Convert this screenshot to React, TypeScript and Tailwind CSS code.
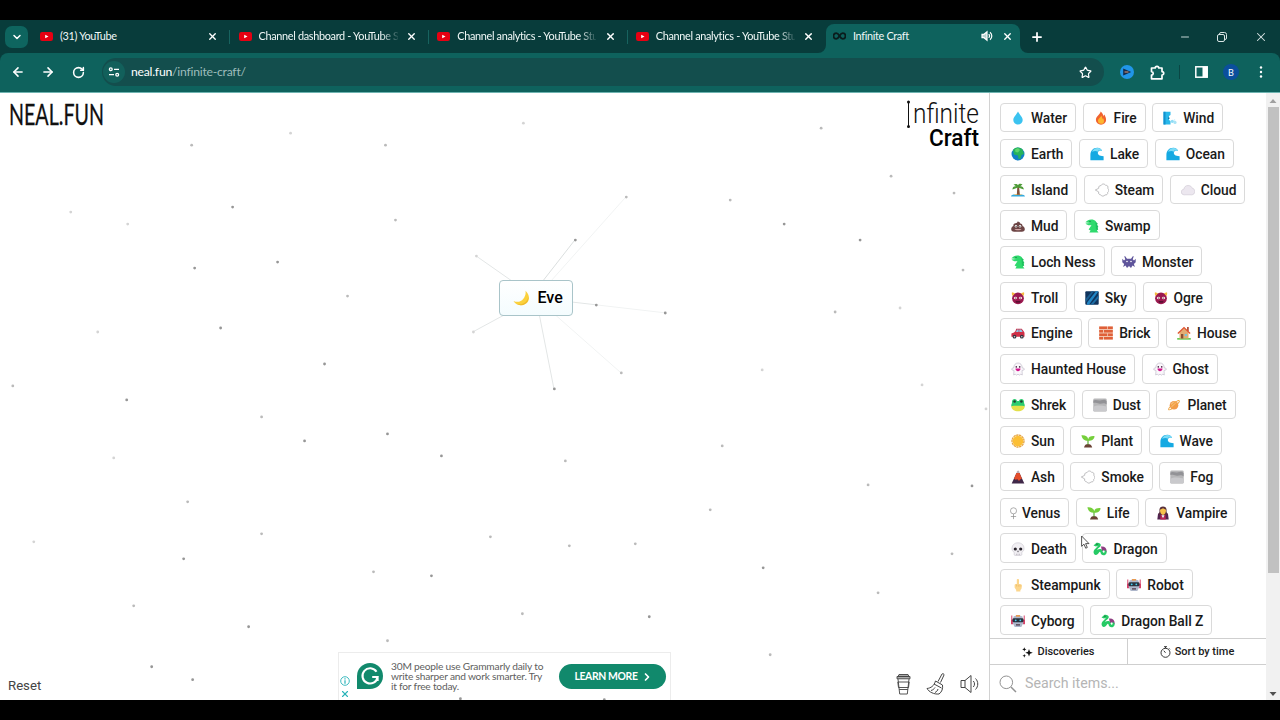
import React from 'react';
import {
  ArrowLeft,
  ArrowRight,
  ChevronDown,
  ChevronRight,
  Minus,
  Plus,
  RotateCw,
  Star,
  X,
} from 'lucide-react';

interface TabItem {
  title: string;
  fade?: boolean;
}

interface Element {
  name: string;
  icon: string;
}

const tabs: TabItem[] = [
  { title: '(31) YouTube' },
  { title: 'Channel dashboard - YouTube S', fade: true },
  { title: 'Channel analytics - YouTube Stu', fade: true },
  { title: 'Channel analytics - YouTube Stu', fade: true },
];

const rows: Element[][] = [
  [{ name: 'Water', icon: 'drop' }, { name: 'Fire', icon: 'fire' }, { name: 'Wind', icon: 'wind' }],
  [{ name: 'Earth', icon: 'earth' }, { name: 'Lake', icon: 'wave' }, { name: 'Ocean', icon: 'wave' }],
  [{ name: 'Island', icon: 'island' }, { name: 'Steam', icon: 'puff' }, { name: 'Cloud', icon: 'cloud' }],
  [{ name: 'Mud', icon: 'mud' }, { name: 'Swamp', icon: 'croc' }],
  [{ name: 'Loch Ness', icon: 'croc' }, { name: 'Monster', icon: 'invader' }],
  [{ name: 'Troll', icon: 'ogre' }, { name: 'Sky', icon: 'sky' }, { name: 'Ogre', icon: 'ogre' }],
  [{ name: 'Engine', icon: 'car' }, { name: 'Brick', icon: 'brick' }, { name: 'House', icon: 'house' }],
  [{ name: 'Haunted House', icon: 'ghost' }, { name: 'Ghost', icon: 'ghost' }],
  [{ name: 'Shrek', icon: 'frog' }, { name: 'Dust', icon: 'fog' }, { name: 'Planet', icon: 'planet' }],
  [{ name: 'Sun', icon: 'sun' }, { name: 'Plant', icon: 'plant' }, { name: 'Wave', icon: 'wave' }],
  [{ name: 'Ash', icon: 'volcano' }, { name: 'Smoke', icon: 'puff' }, { name: 'Fog', icon: 'fog' }],
  [{ name: 'Venus', icon: 'venus' }, { name: 'Life', icon: 'plant' }, { name: 'Vampire', icon: 'vampire' }],
  [{ name: 'Death', icon: 'skull' }, { name: 'Dragon', icon: 'dragon' }],
  [{ name: 'Steampunk', icon: 'finger' }, { name: 'Robot', icon: 'robot' }],
  [{ name: 'Cyborg', icon: 'robot' }, { name: 'Dragon Ball Z', icon: 'dragon' }],
];

// Background particles: x, y, shade (0 light, 1 mid, 2 dark)
const particles: [number, number, number][] = [
  [523, 30, 0], [290, 40, 0], [191, 52, 1], [385, 52, 1], [821, 35, 1], [891, 83, 1], [954, 100, 1],
  [626, 104, 1], [730, 107, 1], [784, 131, 2], [860, 147, 2], [963, 177, 1], [70, 119, 0], [127, 131, 0],
  [232, 114, 2], [395, 127, 1], [277, 169, 2], [194, 175, 2], [347, 203, 1], [220, 235, 2], [97, 239, 0],
  [324, 271, 2], [12, 293, 1], [126, 307, 2], [261, 324, 1], [304, 348, 2], [387, 341, 2], [441, 363, 2],
  [476, 163, 0], [575, 147, 2], [596, 212, 2], [665, 220, 2], [473, 239, 0], [554, 296, 2], [621, 280, 1],
  [835, 219, 1], [900, 215, 0], [762, 277, 0], [922, 292, 0], [986, 316, 0], [722, 353, 1], [565, 368, 1],
  [710, 417, 1], [868, 392, 1], [972, 393, 2], [113, 365, 0], [187, 409, 1], [261, 441, 1], [33, 449, 0],
  [183, 466, 2], [490, 444, 1], [569, 453, 1], [635, 451, 1], [373, 479, 1], [431, 483, 2], [763, 475, 2],
  [878, 500, 1], [952, 461, 1], [133, 513, 1], [248, 534, 2], [387, 548, 1], [522, 521, 1], [649, 524, 2],
  [770, 562, 1], [151, 574, 2], [192, 587, 2], [460, 606, 2], [604, 607, 2],
];

const shades = ['#d4d4d4', '#bababa', '#969696'];

const glyphs: Record<string, React.ReactNode> = {
  drop: <path d="M7 .6C5.700 3.500 2.300 6 2.300 9.100a4.700 4.500 0 0 0 9.400 0C11.700 6 8.300 3.500 7 .6Z" fill="#3bc3f0" />,
  fire: (
    <>
      <path d="M6.500.5c.3 2.500-4.600 4.500-4.600 8.500a5.100 4.700 0 0 0 10.200 0c0-3-1.300-4-1.700-5.500-.7.500-.9 1.200-1 2C9.300 3.500 8.300 1.500 6.500.5Z" fill="#f1632f" />
      <path d="M7 4.500c.3 1.800-3 2.900-3 5.300a3 2.900 0 0 0 6 .1c0-1.400-.5-2-.9-2.700l-.7.9C8.300 6.700 8 5.500 7 4.500Z" fill="#fdb62f" />
    </>
  ),
  wind: (
    <>
      <path d="M.5.800h7v3.200L6 5v4l1.500 1v3.500H.5Z" fill="#29b8ea" />
      <path d="M.5.800h2v12.700h-2Z" fill="#1291cf" />
      <path d="M5 6.500h1.500v1.500H5Z" fill="#1377a9" />
      <circle cx="9.300" cy="10.300" r="1.600" fill="#8fdcf5" />
      <circle cx="12" cy="11.400" r="1.600" fill="#a9e4f6" />
      <circle cx="11.500" cy="9" r=".8" fill="#c6effa" />
    </>
  ),
  earth: (
    <>
      <circle cx="7" cy="7" r="6.500" fill="#1180c6" />
      <path d="M2 3C4-.2 9-.2 11.500 2.500L13 7l-2.500 1-1 3.500L7.500 12 7 8.500 3 7.500Z" fill="#27b35b" />
      <path d="M4 2.500 7 1l2 2-2 2.500L4.500 5Z" fill="#5ed66d" />
    </>
  ),
  wave: (
    <>
      <path d="M.4 13.300V8C.4 3.500 3.400.7 7.300.7c2.600 0 4.300 1.400 4.800 3.300C10.500 3 8.600 3.400 8 5c-.8 2.300 1.200 4.200 5.600 4.200v4.100Z" fill="#15a9e2" />
      <path d="M2 4.700C3.200 2 5.500.8 8 1c2 .2 3.500 1.300 4 3-1.600-1-3.500-.9-4.300.7-1.500-1-3.500-.7-5.700 0Z" fill="#7bdcf7" />
    </>
  ),
  island: (
    <>
      <path d="M0 13.500c0-1.500 2-2 3.500-2h7c1.500 0 3.500.7 3.500 2Z" fill="#35a9dc" />
      <path d="M2.500 12c1-1.500 8-1.500 9 0Z" fill="#f4c26b" />
      <path d="M6.300 4h1.800l.8 7.800H5.800Z" fill="#80513a" />
      <path d="M7 4.500 1.500 6.500C1.500 4 3 3 5 3.300L2.500 1.600C4.500.5 6.200.8 7 2.200 8 .5 10 .5 11.500 1.600L9.200 3.300c2-.3 3.600 1 3.600 3.200Z" fill="#4d9b37" />
    </>
  ),
  puff: (
    <path d="M.3 7 3.700 5.300C3.300 3.200 5 2.300 6 2.700 6.600.6 9.600.4 10.500 2.300c2-.3 3.100 1.400 2.200 2.900 1.500.9 1.500 3.200 0 4 .5 1.900-1.200 3.100-2.700 2.700-.9 1.700-3.600 1.600-4.300-.1C4.200 12 3.200 10.500 3.700 8.900Z" fill="#fff" stroke="#b0b0b3" strokeWidth=".8" strokeLinejoin="round" />
  ),
  cloud: <path d="M3.300 11.800C1.200 11.800.3 10.400.3 9c0-1.700 1.200-2.700 2.600-2.800C3.300 3.500 5 2.500 7.200 2.500c2.300 0 3.500 1.200 3.900 2.700 1.700.2 2.700 1.500 2.700 3.300 0 2-1.300 3.300-3.300 3.300Z" fill="#ece7ef" stroke="#cbc5d0" strokeWidth=".6" />,
  mud: (
    <>
      <path d="M6.500 2.500c1.800.3 2.700 1 2.700 2 1.800.3 2.500 1.500 2.300 2.500 1.500.5 2.300 1.700 2.300 3.200 0 1.600-1 2.500-3 2.500H3.200c-2 0-3-.9-3-2.500C.2 8.700 1 7.500 2.400 7c-.3-1.500.5-2.500 2-2.700C5.800 4.100 6.500 3.500 6.500 2.500Z" fill="#6d4545" />
      <circle cx="5" cy="7.300" r="1.200" fill="#fff" />
      <circle cx="9" cy="7.300" r="1.200" fill="#fff" />
      <circle cx="5.100" cy="7.300" r=".6" fill="#222" />
      <circle cx="8.900" cy="7.300" r=".6" fill="#222" />
      <path d="M3.500 9.900h7c-.5 1.800-6.500 1.800-7 0Z" fill="#d4a7a7" />
    </>
  ),
  croc: (
    <>
      <path d="M3 1.300C5-.1 9.300.2 10.800 2.300c1.600 2 2 5 2.200 8l-1.100 1.100 1.600 2.100H4.300l1.300-2-2-1 1.700-2.500L6.500 6C4.500 6.600 2 6.300.5 4.500L5 4 .3 3.300Z" fill="#2fda6d" />
      <path d="M10.500 3 13 4.700l-1.500.8L13.500 8l-1.400.6 1.200 2.500-2.300-.6Z" fill="#20bf5f" />
      <circle cx="5" cy="2.300" r=".6" fill="#145c36" />
    </>
  ),
  invader: (
    <>
      <path d="M3 1 5 3.700h4L11 1l.7.600-1 2.700L12 5.500l1.700-1.800v3.500L11.900 9l1 3-2.400-1.500L9 13 7 11l-2 2-1.500-2.500L1.100 12l1-3L.3 7.200V3.700L2 5.500l1.300-1.200-1-2.700Z" fill="#5f559b" />
      <circle cx="5" cy="6.500" r=".8" fill="#fff" />
      <circle cx="9" cy="6.500" r=".8" fill="#fff" />
    </>
  ),
  ogre: (
    <>
      <circle cx="7" cy="7.300" r="5.900" fill="#9b194f" />
      <path d="M1 1.200 4.200 2.200 1.600 5C.8 4 .6 2.500 1 1.200ZM13 1.200l-3.200 1L12.400 5C13.200 4 13.400 2.500 13 1.200Z" fill="#f5b840" />
      <ellipse cx="4.500" cy="7" rx="1.700" ry="1.300" fill="#ffd9e0" />
      <ellipse cx="9.500" cy="7" rx="1.700" ry="1.300" fill="#ffd9e0" />
      <circle cx="4.800" cy="7" r=".6" fill="#111" />
      <circle cx="9.200" cy="7" r=".6" fill="#111" />
      <path d="M4.500 10.200h5l-.5 1.300H5Z" fill="#430d27" />
    </>
  ),
  sky: (
    <>
      <rect x=".3" y=".3" width="13.400" height="13.400" rx="1" fill="#10345d" />
      <path d="M2 11.500 11 .3h2.500L4 13.700H2Z" fill="#2185c4" />
      <path d="M.5 8 7 .3h2L1 11Z" fill="#1a5e91" />
      <path d="M5.500 13.500 13.600 4v3L8 13.600Z" fill="#1d6ea7" />
    </>
  ),
  car: (
    <>
      <path d="m4.500 5 .7-2.300h5.500L12.500 5l1 1.700v4.100H.4V7.500l2.600-1Z" fill="#d02f47" />
      <path d="m5.500 5 .4-1.500h1.700V6H4.500ZM8.300 3.500h2L11.700 6H8.300Z" fill="#8dc7e6" />
      <circle cx="3.500" cy="10.700" r="1.900" fill="#353340" />
      <circle cx="10.800" cy="10.700" r="1.900" fill="#353340" />
      <circle cx="3.500" cy="10.700" r=".8" fill="#ccc" />
      <circle cx="10.800" cy="10.700" r=".8" fill="#ccc" />
    </>
  ),
  brick: (
    <>
      <rect x=".2" y=".5" width="13.600" height="13" fill="#f2c4ae" />
      <path d="M.2.500h8v2.500h-8ZM9 .5h4.800V3H9ZM.2 4H4v2.500H.2ZM5 4h8.800v2.500H5ZM.2 7.500h8V10h-8ZM9 7.500h4.800V10H9ZM.2 11H4v2.500H.2ZM5 11h8.800v2.500H5Z" fill="#df6039" />
    </>
  ),
  house: (
    <>
      <path d="M.2 12h13.600v1.700H.2Z" fill="#6acb54" />
      <path d="M2.500 6 7 2l4.500 4v6.500h-9Z" fill="#e3ac73" />
      <path d="M10 1h1.800v4H10Z" fill="#b5533b" />
      <path d="M7 .7.400 7l.9.900L7 2.600l5.700 5.300.9-.9Z" fill="#e0532f" />
      <path d="M4 8h2.300v4.500H4Z" fill="#8a5133" />
      <path d="M7.700 8H10v2H7.700Z" fill="#75c5dd" />
    </>
  ),
  ghost: (
    <>
      <path d="M2.700 13 3 8.500.8 7.800C.2 6.300 1.800 5.800 2.700 6 2.900 2.700 4.500 1 7 1s4.100 1.700 4.300 5c.9-.2 2.500.3 1.900 1.800L11 8.500l.3 4.500-1.500-.8-1.300.9L7 12.200l-1.500.9-1.300-.9Z" fill="#faf7fb" stroke="#b9b3c2" strokeWidth=".6" />
      <circle cx="5.300" cy="4.900" r=".8" fill="#44213f" />
      <circle cx="8.700" cy="4.900" r=".8" fill="#44213f" />
      <path d="M4.500 6.500h5C9.500 8.300 8.200 9.300 7 9.300S4.500 8.300 4.500 6.500Z" fill="#d3158d" />
    </>
  ),
  frog: (
    <>
      <path d="M1 5C.7 2 2 .9 3.600.9 5 .9 5.700 1.800 6 2.900h2C8.300 1.800 9 .9 10.400.9 12 .9 13.300 2 13 5c.6 1 .9 2.300.7 3.500H.3C.1 7.300.4 6 1 5Z" fill="#2dcc70" />
      <path d="M.3 8.300c2-.6 11.400-.6 13.400 0-.2 3.200-3 5-6.700 5S.5 11.500.3 8.300Z" fill="#e4e04a" />
      <circle cx="3.600" cy="3.500" r="1.300" fill="#213b30" />
      <circle cx="10.400" cy="3.500" r="1.300" fill="#213b30" />
    </>
  ),
  fog: (
    <>
      <rect x=".3" y=".4" width="13.400" height="13.200" rx="1.300" fill="#b6b6b8" />
      <path d="M.4 2.500C3 1 5 3 8 2.200s4-.7 5.600.8v3.500C10 4 9 6.500 6 5.500S2 4.500.4 5Z" fill="#929296" />
      <path d="M.4 8.500c3-1.500 8-1.500 13.200 0v4c0 .6-.5 1-1 1H1.500c-.6 0-1-.4-1-1Z" fill="#c9c9cc" />
    </>
  ),
  planet: (
    <>
      <circle cx="7" cy="7.200" r="4.300" fill="#f39a4c" />
      <path d="M4 5.200c2-2 4.300-2 5.700-.8L4.500 9.500Z" fill="#f7bb75" />
      <ellipse cx="7" cy="7.200" rx="6.900" ry="1.500" fill="none" stroke="#efa33f" strokeWidth="1" transform="rotate(-40 7 7.200)" />
    </>
  ),
  sun: (
    <>
      <circle cx="7" cy="7" r="6" fill="none" stroke="#e5a443" strokeWidth="1.300" strokeDasharray="2.350 .5" />
      <circle cx="7" cy="7" r="5.300" fill="#fcbf35" />
    </>
  ),
  plant: (
    <>
      <path d="M3 13.500c.5-2.500 2-3.500 4-3.500s3.700 1 4.200 3.500Z" fill="#6b4235" />
      <path d="M6.400 10.500V6h1.200v4.500Z" fill="#5cae36" />
      <path d="M7 6.800C4 7 1.200 5.500.4 1.300 4 .8 6.800 2.500 7.200 5.200 7.500 3 10 1.800 13.600 2.200 13.300 5.500 10.500 7 7 6.800Z" fill="#76cf3c" />
    </>
  ),
  volcano: (
    <>
      <path d="M5.500 3h3l4.800 10.500H.7Z" fill="#402849" />
      <path d="M5.500 3h3l2.400 5.500-1.700 1-1.200 1.500-1.500-1.800L4.500 9.800 3 8.500Z" fill="#e44d2b" />
      <path d="M5.700 3C5.500 1.300 6.500.6 7.300.5c.8.500 1.300 1.300 1.200 2.500Z" fill="#b9aeb8" />
    </>
  ),
  vampire: (
    <>
      <path d="M1.300 13.500 2 7.700 4.300 6h5.400L12 7.700l.7 5.800Z" fill="#51224f" />
      <path d="m4.700 7.200 2.300 5 2.300-5 .5 6.300H4.200Z" fill="#be2455" />
      <path d="M3.500 5C3 2 4.700.5 7 .5S11 2 10.500 5L11 9H9.300L9 5H5l-.3 4H3Z" fill="#59303b" />
      <path d="M4 3.800 7 2.300l3 1.500C10.100 7 8.500 9 7 9S3.900 7 4 3.800Z" fill="#f7c14b" />
      <path d="m5.500 9.200 1.500 3 1.500-3Z" fill="#fff" />
    </>
  ),
  skull: (
    <>
      <path d="M1 6.500C1 3 3.500.8 7 .8S13 3 13 6.500c0 1.700-.7 3-2.200 3.800v2.400c0 .4-.4.700-.9.700H4.100c-.5 0-.9-.3-.9-.7v-2.400C1.700 9.500 1 8.200 1 6.500Z" fill="#f1eff3" stroke="#c7c4cd" strokeWidth=".6" />
      <circle cx="4.300" cy="7" r="1.600" fill="#29242c" />
      <circle cx="9.700" cy="7" r="1.600" fill="#29242c" />
      <path d="m7 8.500.8 1.500H6.200ZM5.500 11.700v1.500M7 11.700v1.500M8.500 11.700v1.500" fill="#333" stroke="#a39fa8" strokeWidth=".5" />
    </>
  ),
  dragon: (
    <>
      <path d="M8 4.500c4-.5 6.300 2 5.500 6L11 8.200l-2 1Z" fill="#8e3d80" />
      <path d="m.5 3.500 3-2.700c2-.6 4.500.7 4.300 2.500C7.700 5 5 6 4 8c2-1.500 4.500-1.500 5.300.3.500 1.400.4 2.400 1.400 2.400 1.200 0 1.300-2 .3-2.500 2-.4 3 1 2.500 3-.6 2-3.500 2.700-5 1.300-1.300-1.300-.7-3-1.700-2.800-.9.200-1.300 2.800-3.700 3.300C1.500 13.200 0 11.200.7 9 1.300 7 4.500 5 5 3.700L3 4.500Z" fill="#26ca65" />
      <circle cx="4" cy="2.200" r=".6" fill="#174c2e" />
    </>
  ),
  finger: (
    <>
      <path d="M5.800 6V1.800C5.800.6 8 .6 8 1.800V6l1.800.2c1 .2 1.300 1 1.100 2l-.5 2.700-1 1v1.500H5.200v-1.500L3.600 9.600V6.900C3.800 6 5 5.800 5.800 6Z" fill="#fcd68c" />
      <path d="M5.500 6.500v2M7.300 6.700v1.900M9 6.700v1.900" stroke="#e4ac58" strokeWidth=".5" />
    </>
  ),
  robot: (
    <>
      <path d="M.3 1.500h1v5h-1ZM12.700 1.500h1v5h-1ZM0 5.800h2v4.500H0ZM12 5.800h2v4.500h-2Z" fill="#d64068" />
      <path d="M2.500 2.500C4 1 10 1 11.500 2.500l.8 6.500-2 4H3.700l-2-4Z" fill="#aeb7cb" />
      <path d="M5 1h4v1.700H5Z" fill="#e79a52" />
      <rect x="1.500" y="4.300" width="11" height="4" rx="1.300" fill="#28333f" />
      <circle cx="4.700" cy="6.300" r=".9" fill="#49d3f5" />
      <circle cx="9.300" cy="6.300" r=".9" fill="#49d3f5" />
      <path d="M5 10.300h4v1.200H5Z" fill="#4b3140" />
    </>
  ),
};

const ElementIcon = ({ name }: { name: string }) => {
  if (name === 'venus') {
    return (
      <svg className="-mr-px h-3.5 w-[7px] shrink-0 -ml-px" viewBox="0 0 8 14" fill="none" stroke="#8d8d8d" strokeWidth=".8">
        <circle cx="4" cy="4.500" r="3.500" />
        <path d="M4 8v6M1 11h6" />
      </svg>
    );
  }
  return (
    <svg className="h-3.5 w-3.5 shrink-0" viewBox="0 0 14 14" fill="none">
      {glyphs[name]}
    </svg>
  );
};

const YouTubeIcon = () => (
  <svg className="h-[13px] w-[13px] shrink-0" viewBox="0 0 13 13">
    <rect y="2" width="13" height="9" rx="2.200" fill="#e60012" />
    <path d="m5.200 4.700 3.300 1.800-3.300 1.800Z" fill="#fff" />
  </svg>
);

const TabStrip = () => (
  <div className="flex h-[33px] shrink-0 items-center bg-[#083c3b]">
    <div className="ml-[5px] flex h-[22px] w-[23px] shrink-0 items-center justify-center rounded-[7px] bg-[#0e655f]">
      <ChevronDown className="h-3 w-3 text-white" strokeWidth={3} />
    </div>
    <div className="ml-[3.500px] flex items-center">
      {tabs.map((tab, i) => (
        <div key={i} className="flex h-8 w-[198.600px] items-center pl-[8.500px]">
          <YouTubeIcon />
          <span
            className={`ml-[7px] w-[139px] text-[10.900px] tracking-[-0.330px] whitespace-nowrap text-[#f0f8f7] ${
              tab.fade ? '[mask-image:linear-gradient(to_right,#000_122px,transparent_141px)]' : ''
            }`}
          >
            {tab.title}
          </span>
          <X className="ml-[8.500px] h-[11px] w-[11px] shrink-0 text-white" strokeWidth={3} />
          {i < 3 && <span className="ml-[11px] h-3.5 w-px bg-[#17635f]" />}
        </div>
      ))}
    </div>
    <div className="relative ml-[0.500px] flex h-full w-[194px] shrink-0 items-center">
      <div className="absolute inset-x-0 top-1 bottom-0 rounded-t-[8px] bg-[#0e625d]" />
      <svg className="absolute bottom-0 -left-2 h-2 w-2" viewBox="0 0 8 8">
        <path d="M8 0v8H0a8 8 0 0 0 8-8Z" fill="#0e625d" />
      </svg>
      <svg className="absolute -right-2 bottom-0 h-2 w-2" viewBox="0 0 8 8">
        <path d="M0 0v8h8a8 8 0 0 1-8-8Z" fill="#0e625d" />
      </svg>
      <div className="relative flex w-full items-center">
        <svg className="ml-[7px] h-3 w-[13px]" viewBox="0 0 13 12" fill="none" stroke="#0a1c1c" strokeWidth="1.800">
          <path d="M6.500 6C5 3.500 4 3.200 3.200 3.200a2.700 2.800 0 0 0 0 5.600C4 8.800 5 8.500 6.500 6S9 3.200 9.800 3.200a2.700 2.800 0 0 1 0 5.600C9 8.800 8 8.500 6.500 6Z" />
        </svg>
        <span className="ml-[6.500px] w-[128px] text-[10.900px] tracking-[-0.330px] whitespace-nowrap text-[#f0f8f7]">Infinite Craft</span>
        <svg className="h-3 w-3" viewBox="0 0 12 12" fill="none" stroke="#fff" strokeWidth="1.200">
          <path d="M1 4.300h2L6 1.800v8.400L3 7.700H1Z" fill="#b8d3d0" />
          <path d="M7.700 4.200c1 1 1 2.600 0 3.600M9 2.200c2.400 2 2.400 5.600 0 7.600" />
        </svg>
        <X className="ml-[9px] h-[11px] w-[11px] text-white" strokeWidth={3} />
      </div>
    </div>
    <Plus className="ml-[10px] h-3.5 w-3.5 shrink-0 text-white" strokeWidth={3} />
    <div className="ml-auto flex items-center text-[#d9e5e5]">
      <Minus className="mr-[26px] h-3 w-3" strokeWidth={1.8} />
      <svg className="mr-[27px] h-2.5 w-2.5" viewBox="0 0 10 10" fill="none" stroke="currentColor">
        <rect x=".5" y="2.500" width="7" height="7" rx="1.500" />
        <path d="M2.500 2.500V2A1.500 1.500 0 0 1 4 .5h3.500a2 2 0 0 1 2 2V6A1.500 1.500 0 0 1 8 7.500h-.5" />
      </svg>
      <X className="mr-[12px] h-3.5 w-3.5" strokeWidth={1.8} />
    </div>
  </div>
);

const Toolbar = () => (
  <div className="shrink-0 bg-[#083c3b]">
    <div className="flex h-[39.500px] items-center rounded-t-[8px] border-b border-[#6fb4b1] bg-[#0e625d]">
      <ArrowLeft className="ml-[11px] h-3.5 w-3.5 text-white" strokeWidth={2.7} />
      <ArrowRight className="ml-[16px] h-3.5 w-3.5 text-white" strokeWidth={2.7} />
      <RotateCw className="ml-[17px] h-[13px] w-[13px] text-white" strokeWidth={2.8} />
      <div className="ml-[17px] flex h-7 w-[1002px] shrink-0 items-center rounded-full bg-[#134e4d]">
        <div className="ml-[1px] flex h-[22px] w-[22px] items-center justify-center rounded-full bg-[#12605b]">
          <svg className="h-3 w-3" viewBox="0 0 12 12" fill="none" stroke="#fff" strokeWidth="1.300">
            <circle cx="2.800" cy="3.300" r="1.400" />
            <path d="M6 3.300h5M1 8.700h5" />
            <circle cx="9.200" cy="8.700" r="1.400" />
          </svg>
        </div>
        <span className="ml-[6px] text-[12.200px] tracking-[-0.240px] text-[#9dbcbb]">
          <span className="text-white">neal.fun</span>/infinite-craft/
        </span>
        <Star className="mr-[12.500px] ml-auto h-[13px] w-[13px] text-white" strokeWidth={2.2} />
      </div>
      <svg className="ml-[16px] h-3.5 w-3.5 shrink-0" viewBox="0 0 14 14">
        <circle cx="7" cy="7" r="7" fill="#2196e8" />
        <path d="m3.200 3.500 8 3.500-8 3.500Z" fill="#152b4c" />
        <path d="M4.500 6.500h4v1h-4Z" fill="#dfa37c" />
      </svg>
      <svg className="ml-[16px] h-[15px] w-[15px] shrink-0" viewBox="0 0 15 15" fill="none" stroke="#fff" strokeWidth="1.700" strokeLinejoin="round">
        <path d="M1.500 3h3.700C5.200.8 8.800.8 8.800 3H12v3.600c2.300 0 2.300 3.400 0 3.400v3.800H1.500v-3.700c2.300-.2 2.300-3.200 0-3.400Z" />
      </svg>
      <span className="ml-[14px] h-3.5 w-px bg-[#0a4644]" />
      <svg className="ml-[15px] h-3 w-[13px] shrink-0" viewBox="0 0 13 12">
        <rect x=".8" y=".8" width="11.400" height="10.400" fill="none" stroke="#fff" strokeWidth="1.500" />
        <path d="M7.500 1h5v10h-5Z" fill="#fff" />
      </svg>
      <span className="ml-[15px] flex h-4 w-4 items-center justify-center rounded-full bg-[#0b4f9c] text-[9px] text-white">B</span>
      <svg className="ml-[20px] h-3 w-1" viewBox="0 0 4 12" fill="#fff">
        <circle cx="2" cy="1.500" r="1.200" />
        <circle cx="2" cy="6" r="1.200" />
        <circle cx="2" cy="10.500" r="1.200" />
      </svg>
    </div>
  </div>
);

const ParticleField = () => (
  <svg className="absolute inset-0 h-full w-full" viewBox="0 0 989 608" fill="none">
    <g stroke="#e3e6e6" strokeWidth="1">
      <path d="M476 163 536 205M473 239 536 205M536 205 596 212M536 205 554 296" />
      <path d="M575 147 536 197" stroke="#dbdfdf" />
      <path d="M596 212 665 220M536 205 621 280M536 205 626 104" stroke="#f1f3f3" />
    </g>
    {particles.map(([x, y, shade], i) => (
      <circle key={i} cx={x + 0.4} cy={y + 0.2} r={1.4} fill={shades[shade]} />
    ))}
  </svg>
);

const Banner = () => (
  <div className="flex h-[48px] w-[333px] border border-b-0 border-[#ececec]">
    <div className="mt-[23px] ml-[1px] flex w-[10px] flex-col items-center gap-[3px]">
      <svg className="h-2.5 w-2.5" viewBox="0 0 10 10" fill="none" stroke="#29b3b9" strokeWidth=".9">
        <circle cx="5" cy="5" r="4.300" />
        <path d="M5 4.300v3.400M5 2.300v1.200" strokeWidth="1.200" />
      </svg>
      <X className="h-2.5 w-2.5 text-[#29b3b9]" strokeWidth={2.6} />
    </div>
    <svg className="mt-[10px] ml-[7px] h-[26px] w-[26px]" viewBox="0 0 26 26" fill="none">
      <path d="M0 26V13a13 13 0 1 1 13 13Z" fill="#11896c" />
      <path d="M19.500 8.800A7.600 7.600 0 1 0 20.600 14h-5.400M20.600 14v4" stroke="#fff" strokeWidth="2.100" />
    </svg>
    <p className="mt-[7.500px] ml-[8px] w-[160px] font-[Lato] text-[10.200px] leading-[10.300px] tracking-[-0.210px] whitespace-nowrap text-[#606060]">
      30M people use Grammarly daily to
      <br />
      write sharper and work smarter. Try
      <br />
      it for free today.
    </p>
    <button type="button" className="mt-[11px] ml-[8px] flex h-[25px] w-[107px] items-center justify-center rounded-full bg-[#11896c] pl-[2px] font-[Lato] text-[10.400px] font-bold tracking-[-0.350px] text-white">
      LEARN MORE
      <ChevronRight className="ml-[3px] h-3 w-3" strokeWidth={3.4} />
    </button>
  </div>
);

const CanvasTools = () => (
  <div className="flex items-center gap-[14.500px]">
    <svg className="h-[22px] w-[15px]" viewBox="0 0 15 22" fill="none" stroke="#444" strokeWidth=".9">
      <path d="M3 1.500h9l1 2H2ZM1 3.500h13v2.300H1Z" fill="#aaa" />
      <path d="M2 6 3.700 21h7.600L13 6M1.800 9h11.400l-.7 5.500h-10ZM3.200 16.500h8.600" />
    </svg>
    <svg className="h-[22px] w-[20px]" viewBox="0 0 20 22" fill="none" stroke="#444" strokeWidth="1" strokeLinejoin="round">
      <path d="m12 8.500 4-7.500c.8-.8 2.300 0 2 1l-3.500 7.500M9.500 8l7 4M9.500 8C8 13 5 15 1 15.500c2 3.500 7 6 12 5.500 3-2 4-5.500 3.500-9M8 11l7.500 4M5 17.500c2-.5 3-1.500 4-3M9 19.500c2-1 2.500-2 3-3.500" />
    </svg>
    <svg className="h-[20px] w-[19px]" viewBox="0 0 19 20" fill="none" stroke="#444" strokeWidth="1" strokeLinejoin="round">
      <path d="M1 6.500h4l6-5v17l-6-5H1ZM5 6.500v7M13.300 7c1.600 1.500 1.600 4.500 0 6M15.500 4.500c3 3 3 8 0 11" />
    </svg>
  </div>
);

const Canvas = () => (
  <main className="relative flex w-[989px] shrink-0 flex-col justify-between overflow-hidden bg-white">
    <ParticleField />
    <div className="relative flex justify-between">
      <svg className="mt-[7.500px] ml-[9px] h-[32px] w-[100px] overflow-visible" viewBox="0 0 100 32" fontFamily="Lato, sans-serif" fontSize="29" fill="#111" stroke="#111" strokeWidth=".3">
        <text x="0" y="24.500" textLength="95" lengthAdjust="spacingAndGlyphs">
          NEAL.FUN
        </text>
      </svg>
      <svg className="mt-[3.500px] mr-[8px] h-[55px] w-[76px] overflow-visible" viewBox="0 0 76 55">
        <path d="M3.500 6v24" stroke="#111" strokeWidth="1" />
        <circle cx="3.500" cy="6" r="1.500" fill="#111" />
        <circle cx="3.500" cy="30.500" r="1.500" fill="#111" />
        <text x="8" y="26.500" textLength="66" lengthAdjust="spacingAndGlyphs" fontFamily="Roboto, sans-serif" fontWeight="300" fontSize="27" fill="#111">
          nfinite
        </text>
        <text x="24" y="49.500" textLength="50" lengthAdjust="spacingAndGlyphs" fontFamily="Roboto, sans-serif" fontWeight="500" fontSize="24" fill="#000">
          Craft
        </text>
      </svg>
    </div>
    <div className="absolute top-[187px] left-[499px] flex h-[36px] w-[74px] items-center rounded-[4px] border border-[#a9c4c9] bg-gradient-to-b from-white to-[#f4fcfe] pt-px pl-[13px]">
      <svg className="h-4 w-[17px]" viewBox="0 0 17 16">
        <path d="M12.500.8c4.500 4.300 4.300 9.500 1 12.500-3.700 3.200-10 2.700-13-2.300 4 1.700 7.500.8 9.700-2 2-2.500 2.800-5 2.300-8.200Z" fill="#fbd13c" />
        <path d="M15.500 6.500c.2 2.700-.7 5.200-2.500 6.800-2.500 2.200-6.500 2.400-9.500.7 3.500.6 6.500.3 8.500-1.500s3-3.700 3.500-6Z" fill="#eeb92e" />
      </svg>
      <span className="ml-[7.500px] text-[16px] font-medium text-black">Eve</span>
    </div>
    <div className="relative flex h-[48px] items-start">
      <span className="mt-[24px] ml-[8px] w-[330px] text-[13.200px] leading-5 text-[#444]">Reset</span>
      <Banner />
      <div className="mt-[21px] mr-[10px] ml-auto">
        <CanvasTools />
      </div>
    </div>
  </main>
);

const Sidebar = () => (
  <aside className="flex w-[277px] shrink-0 flex-col border-l border-[#d2d2d2] bg-white">
    <div className="flex flex-1 flex-col gap-[6.400px] overflow-hidden pt-[10.300px] pl-[10px]">
      {rows.map((row, i) => (
        <div key={i} className="flex shrink-0 gap-[6.600px]">
          {row.map((el) => (
            <div key={el.name} className="flex h-[29.500px] items-center rounded-[4px] border border-[#dadada] bg-white pt-px pr-[8px] pl-[10px]">
              <ElementIcon name={el.icon} />
              <span className="ml-[6px] text-[13.800px] leading-5 font-medium tracking-[-0.050px] whitespace-nowrap text-[#1a1a1a]">{el.name}</span>
            </div>
          ))}
        </div>
      ))}
    </div>
    <div className="flex h-[27px] shrink-0 border-y border-[#cfcfcf] pt-px text-[11px] font-medium text-[#1c1c1c]">
      <div className="-mt-px flex w-[138px] items-center justify-center border-r border-[#cfcfcf] pt-px">
        <svg className="mr-[4px] h-[11px] w-[11px]" viewBox="0 0 11 11" fill="#111">
          <path d="m7 2 1 2.700 2.800 1-2.800 1L7 9.500 6 6.700l-2.700-1L6 4.700ZM2.300.300l.6 1.500 1.500.6-1.500.6-.6 1.500L1.700 3 .2 2.400l1.500-.6ZM2.300 7l.5 1.300L4 8.800l-1.200.5-.5 1.400-.5-1.400L.5 8.800l1.300-.5Z" />
        </svg>
        Discoveries
      </div>
      <div className="flex flex-1 items-center justify-center">
        <svg className="mr-[4px] h-[12px] w-[11px]" viewBox="0 0 11 12" fill="none" stroke="#222" strokeWidth=".9">
          <circle cx="5.500" cy="6.800" r="4.500" />
          <path d="M5.500 2.300V.8M4 .7h3M9 2.300l1 1M5.500 6.800 3.800 4.700" />
        </svg>
        Sort by time
      </div>
    </div>
    <div className="flex h-[35px] shrink-0 items-center pt-[2px] pl-[9px]">
      <svg className="mt-px h-[18px] w-[18px]" viewBox="0 0 18 18" fill="none" stroke="#929292" strokeWidth="1">
        <circle cx="7.300" cy="7.300" r="6.300" />
        <path d="m12 12 5 5" strokeWidth="1.500" />
      </svg>
      <input
        type="text"
        placeholder="Search items..."
        className="ml-[8px] w-[200px] text-[14.200px] outline-none placeholder:text-[#b5b5b5]"
      />
    </div>
  </aside>
);

const Scrollbar = () => (
  <div className="flex flex-1 flex-col items-center bg-[#f1f1f1]">
    <svg className="mt-[6px] h-1 w-2" viewBox="0 0 8 4">
      <path d="m4 0 3.500 4h-7Z" fill="#a0a0a0" />
    </svg>
    <div className="mt-[4px] h-[466px] w-[11px] bg-[#c1c1c1]" />
    <svg className="mt-auto mb-[4px] h-1 w-2" viewBox="0 0 8 4">
      <path d="m4 4 3.500-4h-7Z" fill="#505050" />
    </svg>
  </div>
);

export default function App() {
  return (
    <div className="relative flex h-[720px] w-[1280px] flex-col overflow-hidden bg-black py-5">
      <div className="flex shrink-0 flex-col font-[Lato,sans-serif]">
        <TabStrip />
        <Toolbar />
      </div>
      <div className="flex min-h-0 flex-1 font-[Roboto,sans-serif]">
        <Canvas />
        <Sidebar />
        <Scrollbar />
      </div>
      {/* Mouse pointer */}
      <svg className="absolute top-[535px] left-[1081px] h-[14px] w-[9px]" viewBox="0 0 9 14">
        <path d="M.6 1v10.300L3 9.200l1.700 4 1.600-.7-1.700-3.900H8Z" fill="#fff" stroke="#444" strokeWidth=".9" />
      </svg>
    </div>
  );
}
